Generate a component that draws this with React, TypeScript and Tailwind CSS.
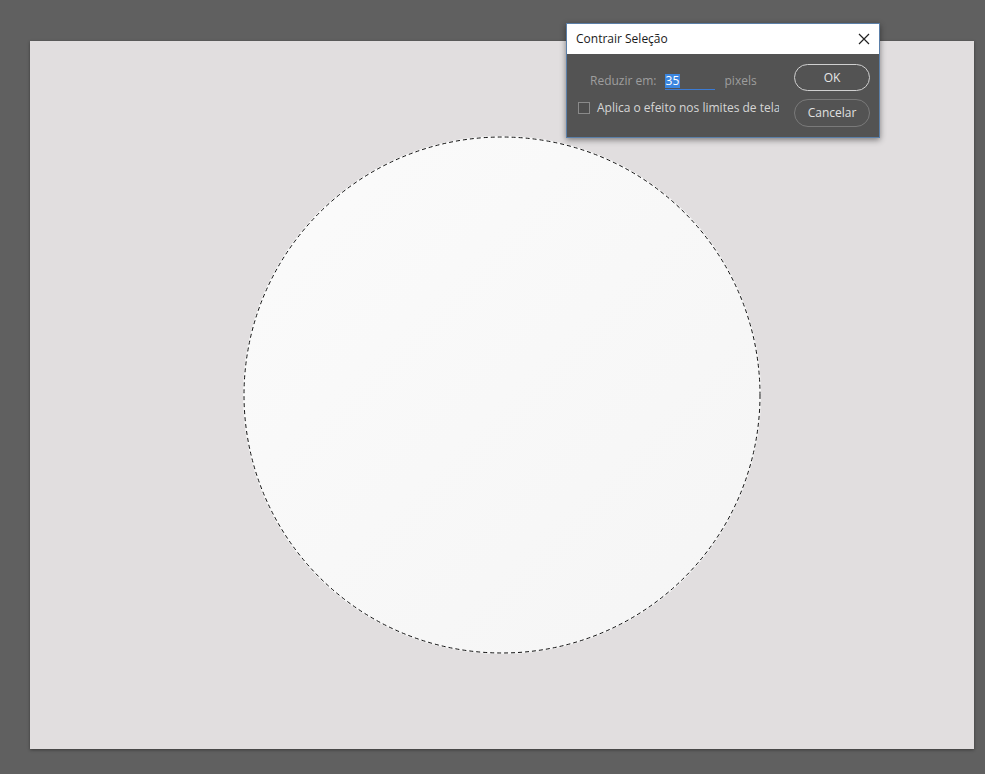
import React from 'react';

const Dialog = () => {
    return (
        <div className="absolute left-[566px] top-[23px] w-[314px] h-[115px] border border-[#5b7fa8] bg-[#535353] shadow-[0_2px_6px_rgba(0,0,0,0.45)] flex flex-col">
            <div className="h-[30px] bg-white flex items-center justify-between pl-[9px] pr-[9px] text-[12px] text-[#1a1a1a]">
                <span>Contrair Seleção</span>
                <svg width="12" height="12" viewBox="0 0 12 12">
                    <path d="M1 1 L11 11 M11 1 L1 11" stroke="#222" strokeWidth="1.2" />
                </svg>
            </div>
            <div className="flex-1 flex pt-[10px]">
                <div className="w-[212px] overflow-hidden pt-[5px]">
                    <div className="flex items-center h-[24px] pl-[23px] text-[12px] text-[#9e9e9e]">
                        <span>Reduzir em:</span>
                        <span className="ml-[8px] w-[50px] h-[17px] border-b border-[#3b7bd4] flex items-center">
                            <span className="bg-[#3b86e0] text-white px-[1px] leading-[14px]">35</span>
                        </span>
                        <span className="ml-[10px]">pixels</span>
                    </div>
                    <div className="flex items-center h-[20px] pl-[11px] mt-[5px] text-[12px] text-[#d6d6d6] whitespace-nowrap">
                        <span className="w-[12px] h-[12px] border border-[#8a8a8a] bg-[#4e4e4e] shrink-0" />
                        <span className="ml-[7px]">Aplica o efeito nos limites de tela</span>
                    </div>
                </div>
                <div className="flex flex-col gap-[8px] ml-[15px]">
                    <button className="w-[76px] h-[27px] rounded-full border border-[#d0d0d0] text-[12px] text-[#e6e6e6]">OK</button>
                    <button className="w-[76px] h-[28px] rounded-full border border-[#7a7a7a] text-[12px] text-[#e0e0e0]">Cancelar</button>
                </div>
            </div>
        </div>
    );
};

export default function App() {
    return (
        <div className="relative w-[985px] h-[774px] bg-[#606060] overflow-hidden" style={{ fontFamily: '"Open Sans", "Noto Sans", sans-serif' }}>
            <div className="pt-[41px] pl-[30px]">
                <div className="w-[944px] h-[708px] bg-[#e1dedf] flex items-center justify-center shadow-[0_1px_3px_rgba(0,0,0,0.4)]">
                    <div className="relative w-[518px] h-[518px]">
                        <div className="w-full h-full rounded-full bg-gradient-to-br from-[#fbfbfb] to-[#f5f5f5]" />
                        <svg className="absolute inset-0" width="518" height="518" viewBox="0 0 518 518">
                            <circle cx="259" cy="259" r="258" fill="none" stroke="#111" strokeWidth="1" strokeDasharray="4 3" />
                        </svg>
                    </div>
                </div>
            </div>
            <Dialog />
        </div>
    );
}
